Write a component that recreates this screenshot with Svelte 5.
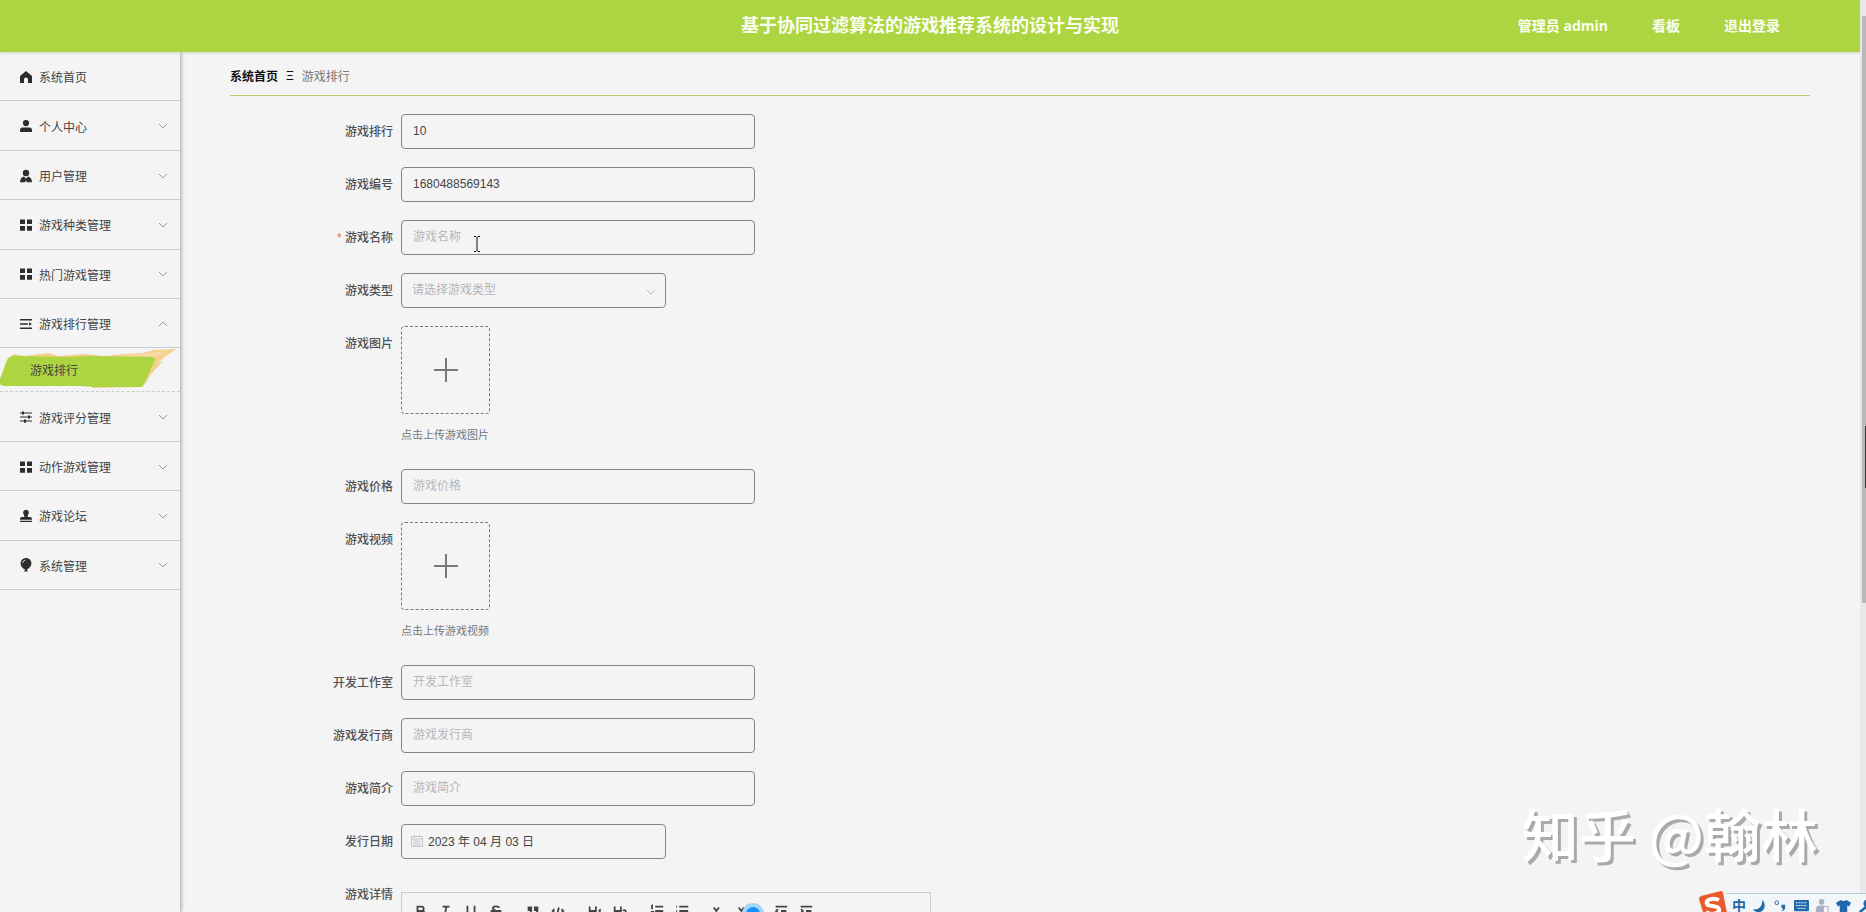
<script lang="ts">
    interface MenuItem {
        name: string;
        icon: string;
        children?: string[];
        leaf?: boolean;
    }

    interface Field {
        id: string;
        label: string;
        type: string;
        value?: string;
        placeholder?: string;
        required?: boolean;
    }

    const menu: MenuItem[] = [
        { name: '系统首页', icon: 'home', leaf: true },
        { name: '个人中心', icon: 'user' },
        { name: '用户管理', icon: 'custom' },
        { name: '游戏种类管理', icon: 'grid' },
        { name: '热门游戏管理', icon: 'grid' },
        { name: '游戏排行管理', icon: 'fold', children: ['游戏排行'] },
        { name: '游戏评分管理', icon: 'operation' },
        { name: '动作游戏管理', icon: 'grid' },
        { name: '游戏论坛', icon: 'stamp' },
        { name: '系统管理', icon: 'balloon' },
    ];

    const fields: Field[] = [
        { id: 'paihang', label: '游戏排行', type: 'text', value: '10' },
        { id: 'bianhao', label: '游戏编号', type: 'text', value: '1680488569143' },
        { id: 'mingcheng', label: '游戏名称', type: 'text', placeholder: '游戏名称', required: true },
        { id: 'leixing', label: '游戏类型', type: 'select', placeholder: '请选择游戏类型' },
        { id: 'tupian', label: '游戏图片', type: 'upload', placeholder: '点击上传游戏图片' },
        { id: 'jiage', label: '游戏价格', type: 'text', placeholder: '游戏价格' },
        { id: 'shipin', label: '游戏视频', type: 'upload', placeholder: '点击上传游戏视频' },
        { id: 'gongzuoshi', label: '开发工作室', type: 'text', placeholder: '开发工作室' },
        { id: 'faxingshang', label: '游戏发行商', type: 'text', placeholder: '游戏发行商' },
        { id: 'jianjie', label: '游戏简介', type: 'text', placeholder: '游戏简介' },
        { id: 'riqi', label: '发行日期', type: 'date', value: '2023 年 04 月 03 日' },
    ];

    // filled shapes of the side menu, 14 x 14
    const menuIcons: Record<string, string> = {
        home: 'M7 1 L13 6 V13 H9 V9.5 A2 2 0 0 0 5 9.5 V13 H1 V6 Z',
        user: 'M7 1 a3.1 3.1 0 1 1 0 6.2 a3.1 3.1 0 1 1 0 -6.2 Z M1 13 V11.3 A2.8 2.8 0 0 1 3.8 8.5 H10.2 A2.8 2.8 0 0 1 13 11.3 V13 Z',
        custom: 'M7 .8 a3.2 3.2 0 1 1 0 6.4 a3.2 3.2 0 1 1 0 -6.4 Z M1 13.2 C1.2 10 2.5 8.3 5 7.6 L7 9.8 L9 7.6 C11.5 8.3 12.8 10 13 13.2 H8 L7 11.5 L6 13.2 Z',
        grid: 'M1 1.5 H6 V6 H1 Z M8 1.5 H13 V6 H8 Z M1 8 H6 V12.8 H1 Z M8 8 H13 V12.8 H8 Z',
        fold: 'M1 2 H13 V3.6 H1 Z M1 6.2 H9 V7.8 H1 Z M10 5.2 L13 7 L10 8.8 Z M1 10.5 H13 V12 H1 Z',
        operation: 'M1 2.6 H3 V1.6 H5 V2.6 H13 V3.6 H5 V4.6 H3 V3.6 H1 Z M1 6.6 H9 V5.6 H11 V6.6 H13 V7.6 H11 V8.6 H9 V7.6 H1 Z M1 10.6 H5 V9.6 H7 V10.6 H13 V11.6 H7 V12.8 H5 V11.6 H1 Z',
        stamp: 'M7 .8 A2.9 2.9 0 0 1 9 5.8 L8.6 8 H11 A2 2 0 0 1 13 10 V10.8 H1 V10 A2 2 0 0 1 3 8 H5.4 L5 5.8 A2.9 2.9 0 0 1 7 .8 Z M1 11.8 H13 V13 H1 Z',
        balloon: 'M7 0 A5.2 5.2 0 0 1 12.4 5.4 C12.4 8.3 9.8 10.6 7.8 11.5 L9 13.5 H5 L6.2 11.5 C4.2 10.6 1.6 8.3 1.6 5.4 A5.2 5.2 0 0 1 7 0 Z',
    };

    // editor toolbar, stroked on an 18 x 18 box
    const tools = [
        [
            { name: '加粗', d: 'M5 4 H9.5 A2.5 2.5 0 0 1 9.5 9 H5 Z M5 9 H10.5 A2.5 2.5 0 0 1 10.5 14 H5 Z' },
            { name: '斜体', d: 'M5 4 H13 M5 14 H11 M9.5 4 L7.5 14' },
            { name: '下划线', d: 'M5 3 V9 A4 4 0 0 0 13 9 V3 M4 15.5 H14' },
            { name: '删除线', d: 'M12.5 5.5 C12 3.2 5.5 2.8 5.5 6 C5.5 9 12.5 8.5 12.5 12 C12.5 15 6 15 5 12.5 M3 9 H15' },
        ],
        [
            { name: '引用', d: 'M4 5 H7 V8 H4 Z M7 8 C7 10 6 11 4.5 12 M11 5 H14 V8 H11 Z M14 8 C14 10 13 11 11.5 12' },
            { name: '代码', d: 'M5 7 L3 9 L5 11 M13 7 L15 9 L13 11 M10 5 L8 13' },
        ],
        [
            { name: '标题 1', d: 'M3 4 V14 M10 4 V14 M3 9 H10 M13 9 L14.5 8 V14' },
            { name: '标题 2', d: 'M3 4 V14 M10 4 V14 M3 9 H10 M12.5 9 C13 7.5 15.5 7.8 15.5 9.5 C15.5 11 13 12 12.5 14 H16' },
        ],
        [
            { name: '有序列表', d: 'M7 4 H16 M7 9 H16 M7 14 H16 M2.5 3.5 L3.5 3 V7 M2 10 H4.5 L2.5 13 H4.5' },
            { name: '无序列表', d: 'M6 4 H16 M6 9 H16 M6 14 H16 M2.5 4 H3.5 M2.5 9 H3.5 M2.5 14 H3.5' },
        ],
        [
            { name: '下标', d: 'M3 5 L9 13 M9 5 L3 13 M12 12 H14.5 L12.5 15 H15' },
            { name: '上标', d: 'M3 5 L9 13 M9 5 L3 13 M12 3 H14.5 L12.5 6 H15' },
        ],
        [
            { name: '减少缩进', d: 'M3 4 H16 M9 9 H15 M3 14 H16 M5.5 7 L3.5 9 L5.5 11' },
            { name: '增加缩进', d: 'M3 4 H16 M9 9 H15 M3 14 H16 M3.5 7 L5.5 9 L3.5 11' },
        ],
    ];
</script>

<div class="page">
    <header class="header">
        <h1 class="header__title">基于协同过滤算法的游戏推荐系统的设计与实现</h1>
        <nav class="header__nav">
            <a href="#admin">管理员 admin</a>
            <a href="#board">看板</a>
            <a href="#logout">退出登录</a>
        </nav>
    </header>

    <div class="body">
        <aside class="sidebar">
            <ul class="menu">
                {#each menu as item}
                    <li class="menu__item">
                        <a class="menu__link" href="#menu">
                            <svg class="menu__icon" viewBox="0 0 14 14" aria-hidden="true">
                                <path d={menuIcons[item.icon]} />
                                {#if item.icon === 'balloon'}
                                    <path class="shine" d="M3.6 5.2 A3.4 3.4 0 0 1 6.6 2" />
                                {/if}
                            </svg>
                            <span>{item.name}</span>
                            {#if !item.leaf}
                                <svg class="menu__arrow" viewBox="0 0 10 10" aria-hidden="true">
                                    <path d={item.children ? 'M1 7 L5 3 L9 7' : 'M1 3 L5 7 L9 3'} />
                                </svg>
                            {/if}
                        </a>
                        {#if item.children}
                            {#each item.children as child}
                                <a class="submenu" href="#sub">
                                    <svg class="submenu__brush" viewBox="0 0 180 43" aria-hidden="true">
                                        <path fill="#f3d08c" d="M8 11 L14 6 L24 8 L48 5 L58 8 L84 6 L104 8 L126 6 L142 5 L154 2 L176 1 L166 8 L157 15 L163 13 L152 25 L143 39 L92 40 L90 30 L12 14 Z" />
                                        <path fill="#f6dca9" d="M118 8 L150 5 L168 3 L155 8 Z" />
                                        <path fill="#add542" d="M7 12 Q9 8 14 8 L70 9 L90 8 L152 9 Q157 10 154 14 L145 34 Q143 39 138 39 L96 39 L80 38 L3 38 Q-2 37 0 31 Z" />
                                    </svg>
                                    <span class="submenu__text">{child}</span>
                                </a>
                            {/each}
                        {/if}
                    </li>
                {/each}
            </ul>
        </aside>

        <main class="main">
            <nav class="crumbs">
                <a href="#home">系统首页</a>
                <span class="crumbs__sep">Ξ</span>
                <span class="crumbs__here">游戏排行</span>
            </nav>

            <form class="form">
                {#each fields as field}
                    <div class="row">
                        <label class="row__label" for={field.id}>
                            {#if field.required}<span class="star">*</span>{/if}
                            {field.label}
                        </label>
                        {#if field.type === 'text'}
                            <div class="control">
                                <input id={field.id} class="input" type="text" value={field.value ?? ''} placeholder={field.placeholder} />
                                {#if field.required}
                                    <svg class="ibeam" viewBox="0 0 8 16" aria-hidden="true">
                                        <path d="M1 .5 H3 L4 1.5 L5 .5 H7 M4 1.5 V14.5 M1 15.5 H3 L4 14.5 L5 15.5 H7" />
                                    </svg>
                                {/if}
                            </div>
                        {:else if field.type === 'select'}
                            <div class="control control--short">
                                <select id={field.id} class="input input--select">
                                    <option value="">{field.placeholder}</option>
                                </select>
                                <svg class="select__arrow" viewBox="0 0 10 10" aria-hidden="true"><path d="M1 3 L5 7 L9 3" /></svg>
                            </div>
                        {:else if field.type === 'date'}
                            <div class="control control--short">
                                <input id={field.id} class="input input--date" type="text" value={field.value} />
                                <svg class="calendar" viewBox="0 0 12 12" aria-hidden="true">
                                    <path d="M.5 1.5 H11.5 V11.5 H.5 Z M.5 4 H11.5 M3.5 0 V2.5 M8.5 0 V2.5 M2.5 6 H9.5 M2.5 8 H9.5 M2.5 10 H9.5" />
                                </svg>
                            </div>
                        {:else}
                            <div class="upload">
                                <button id={field.id} class="upload__box" type="button">
                                    <svg viewBox="0 0 24 24" aria-hidden="true"><path d="M12 0 V24 M0 12 H24" /></svg>
                                </button>
                                <p class="upload__tip">{field.placeholder}</p>
                            </div>
                        {/if}
                    </div>
                {/each}

                <div class="row">
                    <span class="row__label">游戏详情</span>
                    <div class="editor">
                        <div class="toolbar">
                            {#each tools as group}
                                <div class="toolbar__group">
                                    {#each group as tool}
                                        <button class="tool" type="button" aria-label={tool.name}>
                                            <svg class:solid={tool.name === '引用'} viewBox="0 0 18 18" aria-hidden="true"><path d={tool.d} /></svg>
                                        </button>
                                    {/each}
                                </div>
                            {/each}
                            <span class="pulse"></span>
                        </div>
                    </div>
                </div>
            </form>
        </main>
    </div>
</div>

<div class="scrollbar"><div class="scrollbar__thumb"></div><div class="scrollbar__mark"></div></div>

<div class="watermark">知乎 @翰林</div>

<div class="ime">
    <svg class="ime__logo" viewBox="0 0 28 28" aria-hidden="true">
        <path fill="#e8592b" d="M2 5 L22 0 Q24 0 24 2 L28 22 L24 27 L6 28 L0 8 Q0 6 2 5 Z" />
        <path fill="none" stroke="#fff" stroke-width="4" d="M20 9 C14 6 6 9 8 13 C9 16 19 14 20 18 C21 22 13 25 7 21" />
    </svg>
    <div class="ime__bar">
        <span class="ime__zh">中</span>
        <svg viewBox="0 0 16 16" aria-hidden="true"><path d="M11 1 C16 6 13 14 7 14 C4 14 2 13 1 11 C8 12 11 7 11 1 Z" /></svg>
        <svg viewBox="0 0 16 16" aria-hidden="true"><circle class="line" cx="4" cy="4" r="2" /><path d="M9 6 H13 V9 Q13 12 9 13 Q11 11 10.5 9.5 H9 Z" /></svg>
        <svg viewBox="0 0 16 16" aria-hidden="true"><path d="M1 1 H15 Q16 1 16 2 V12 Q16 13 15 13 H1 Q0 13 0 12 V2 Q0 1 1 1 Z" /><path class="keys" d="M2 4 H14 M2 7 H14 M4 10 H12" /></svg>
        <svg class="faded" viewBox="0 0 16 16" aria-hidden="true"><path d="M7 0 A3 3 0 0 1 7 6 A3 3 0 0 1 7 0 Z M1 14 Q0 7 5 7 H9 Q13 7 13 14 Z" /><path class="badge" d="M9 8 H14 V15 H9 Z" /></svg>
        <svg viewBox="0 0 16 16" aria-hidden="true"><path d="M5 1 Q8 3 11 1 L16 4 L14 8 L12 7 V15 H4 V7 L2 8 L0 4 Z" /></svg>
        <svg viewBox="0 0 16 16" aria-hidden="true"><path d="M15 1 A5 5 0 0 0 8 8 L2 13 L4 15 L10 10 A5 5 0 0 0 16 8 L11 7 L10 5 Z" /></svg>
    </div>
</div>

<style>
    :global(body) {
        background: #f4f4f4;
    }

    .page {
        display: flex;
        flex-direction: column;
        height: 100vh;
        margin-right: 6px;
        overflow: hidden;
        font-family: "Liberation Sans", "Noto Sans CJK SC", sans-serif;
        font-size: 12px;
        color: #444;
    }

    a {
        color: inherit;
        text-decoration: none;
    }

    .header {
        display: grid;
        grid-template-columns: 1fr auto 1fr;
        align-items: center;
        flex: none;
        height: 52px;
        padding: 0 80px;
        background: #add542;
        color: #fafdf0;
        box-shadow: 0 1px 3px rgba(0, 0, 0, .15);
        z-index: 1;
    }

    .header__title {
        grid-column: 2;
        margin: 0;
        font-size: 18px;
        line-height: 24px;
    }

    .header__nav {
        display: flex;
        justify-content: flex-end;
        gap: 44px;
        font-family: "Open Sans", "Noto Sans CJK SC", sans-serif;
        font-size: 14px;
        font-weight: 700;
        line-height: 20px;
    }

    .body {
        display: flex;
        flex: 1;
        min-height: 0;
    }

    .sidebar {
        flex: none;
        width: 180px;
        box-shadow: 1px 0 4px rgba(0, 0, 0, .35);
    }

    .menu {
        display: flex;
        flex-direction: column;
        min-height: 538px;
        margin: 0;
        padding: 0;
        list-style: none;
    }

    .menu__item {
        display: flex;
        flex-direction: column;
        flex: 1 0 auto;
    }

    .menu__link {
        display: flex;
        align-items: center;
        flex: 1;
        gap: 6px;
        min-height: 40px;
        padding: 1px 12px 0 19px;
        border-bottom: 1px solid #ccc;
    }

    .menu__icon {
        width: 14px;
        height: 14px;
        fill: #2b2d30;
    }

    .shine {
        fill: none;
        stroke: #ccc;
    }

    .menu__arrow {
        width: 10px;
        height: 10px;
        margin-left: auto;
        fill: none;
        stroke: #999;
    }

    .submenu {
        position: relative;
        display: flex;
        align-items: center;
        height: 43px;
        padding-left: 30px;
        border-bottom: 1px dashed #ccc;
    }

    .submenu__brush {
        position: absolute;
        inset: 0;
        width: 100%;
        height: 100%;
    }

    .submenu__text {
        position: relative;
    }

    .main {
        flex: 1;
        min-width: 0;
        padding: 0 50px;
    }

    .crumbs {
        display: flex;
        align-items: center;
        gap: 8px;
        height: 39px;
        padding-top: 4px;
        border-bottom: 1px solid #b2cf74;
        color: #111;
    }

    .crumbs a {
        font-weight: 700;
    }

    .crumbs__here {
        color: #777;
    }

    .form {
        display: flex;
        flex-direction: column;
        gap: 18px;
        padding-top: 18px;
    }

    .row {
        display: flex;
        gap: 8px;
    }

    .row__label {
        flex: none;
        width: 163px;
        padding-top: 2px;
        line-height: 33px;
        text-align: right;
        font-weight: 500;
        color: #505154;
    }

    .star {
        color: #e06c6c;
    }

    .control {
        position: relative;
        width: 354px;
    }

    .control--short {
        width: 265px;
    }

    .input {
        box-sizing: border-box;
        display: block;
        width: 100%;
        height: 35px;
        padding: 0 11px 2px;
        border: 1px solid #848484;
        border-radius: 4px;
        background: transparent;
        font: inherit;
        color: #444;
    }

    .input::placeholder {
        color: #b4b6ba;
        opacity: 1;
    }

    .input--select {
        appearance: none;
        padding: 0 10px 2px;
        color: #b4b6ba;
    }

    .input--date {
        padding-left: 26px;
    }

    .select__arrow {
        position: absolute;
        top: 14px;
        right: 10px;
        width: 10px;
        height: 10px;
        fill: none;
        stroke: #b4b6ba;
    }

    .calendar {
        position: absolute;
        top: 11px;
        left: 10px;
        width: 12px;
        height: 12px;
        fill: none;
        stroke: #c4c6ca;
    }

    .ibeam {
        position: absolute;
        top: 16px;
        left: 72px;
        width: 8px;
        height: 16px;
        fill: none;
        stroke: #111;
    }

    .upload {
        height: 125px;
    }

    .upload__box {
        display: grid;
        place-items: center;
        width: 89px;
        height: 88px;
        padding: 0;
        border: 1px dashed #777;
        border-radius: 4px;
        background: transparent;
    }

    .upload__box svg {
        width: 24px;
        height: 24px;
        stroke: #777;
        stroke-width: 2;
    }

    .upload__tip {
        margin: 12px 0 0;
        font-size: 11px;
        line-height: 18px;
        color: #727881;
    }

    .editor {
        width: 530px;
        margin-top: 15px;
    }

    .toolbar {
        position: relative;
        display: flex;
        gap: 12px;
        padding: 7px;
        border: 1px solid #ccc;
    }

    .toolbar__group {
        display: flex;
    }

    .tool {
        width: 25px;
        height: 22px;
        padding: 3px 4px;
        border: 0;
        background: none;
    }

    .tool svg {
        display: block;
        width: 16px;
        height: 16px;
        fill: none;
        stroke: #444;
        stroke-width: 2;
    }

    .tool .solid {
        fill: #444;
    }

    .pulse {
        position: absolute;
        top: 10px;
        left: 340px;
        width: 14px;
        height: 14px;
        border: 4px solid #a6d5fb;
        border-radius: 50%;
        background: #1890ff;
    }

    .scrollbar {
        position: fixed;
        inset: 0 0 0 auto;
        width: 6px;
        padding-top: 16px;
        box-sizing: border-box;
        background: #e8e8ea;
    }

    .scrollbar__thumb {
        height: 65.5%;
        margin-left: 2px;
        background: #b8b8b8;
    }

    .scrollbar__mark {
        position: absolute;
        top: 426px;
        right: 0;
        width: 1px;
        height: 62px;
        background: #333;
    }

    .watermark {
        position: fixed;
        right: 48px;
        bottom: 44px;
        font: 500 57px/72px "Noto Sans CJK SC", sans-serif;
        color: #fff;
        text-shadow: 3px 3px 0 #aaa;
        white-space: nowrap;
    }

    .ime {
        position: fixed;
        right: 0;
        bottom: 0;
        display: flex;
        height: 21px;
        overflow: hidden;
    }

    .ime__logo {
        flex: none;
        width: 28px;
        height: 28px;
    }

    .ime__bar {
        display: flex;
        gap: 6px;
        height: 26px;
        margin: 2px -6px 0 0;
        padding: 5px 0 0 5px;
        border-top: 1px solid #b9cad3;
        background: #f3f6f9;
    }

    .ime__bar svg {
        width: 15px;
        height: 15px;
        fill: #2168ad;
    }

    .ime__zh {
        font: 700 14px/12px "Noto Sans CJK SC", sans-serif;
        color: #2168ad;
    }

    .ime__bar .line {
        fill: none;
        stroke: #2168ad;
    }

    .ime__bar .keys {
        stroke: #fff;
        stroke-dasharray: 2 1;
    }

    .ime__bar .faded {
        fill: #a9b0c2;
    }

    .ime__bar .badge {
        fill: #f3f6f9;
        stroke: #a9b0c2;
    }
</style>
